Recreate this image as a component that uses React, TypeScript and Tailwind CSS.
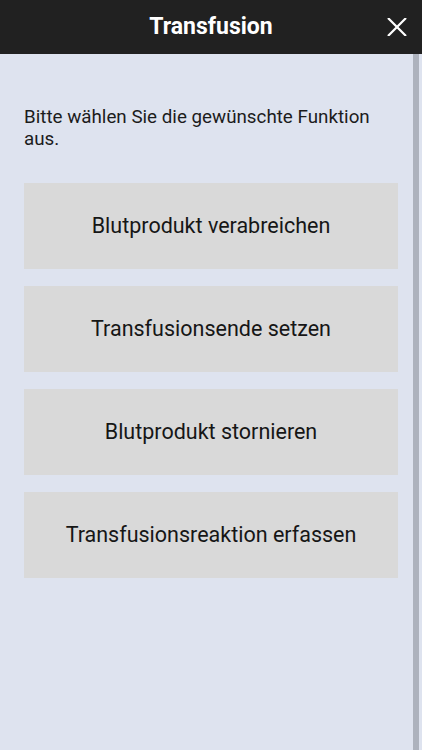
import React from "react";

const items = [
  "Blutprodukt verabreichen",
  "Transfusionsende setzen",
  "Blutprodukt stornieren",
  "Transfusionsreaktion erfassen",
];

export default function App() {
  return (
    <div
      className="w-[422px] h-[750px] flex flex-col bg-[#dee3ef] overflow-hidden"
      style={{ fontFamily: "Roboto, 'Liberation Sans', sans-serif" }}
    >
      <div className="h-[54px] shrink-0 bg-[#212121] relative flex items-center justify-center">
        <span className="text-white font-bold text-[23px]">Transfusion</span>
        <button className="absolute right-[15px] top-[18px] w-[20px] h-[18px]">
          <svg viewBox="0 0 20 18" width="20" height="18">
            <path d="M1 0 L19 18 M19 0 L1 18" stroke="#ffffff" strokeWidth="2.2" />
          </svg>
        </button>
      </div>
      <div className="flex-1 flex">
        <div className="flex-1 pl-[24px] pr-[15px] pt-[52px]">
          <p className="text-[18.8px] leading-[22px] text-[#1c1c1c]">
            Bitte wählen Sie die gewünschte Funktion aus.
          </p>
          <div className="mt-[33px] flex flex-col gap-[17px]">
            {items.map((t) => (
              <button
                key={t}
                className="h-[86px] w-full bg-[#d9d9d9] text-[21.5px] text-[#161616] flex items-center justify-center"
              >
                {t}
              </button>
            ))}
          </div>
        </div>
        <div className="w-[6px] bg-[#adb2bd]" />
        <div className="w-[3px]" />
      </div>
    </div>
  );
}
